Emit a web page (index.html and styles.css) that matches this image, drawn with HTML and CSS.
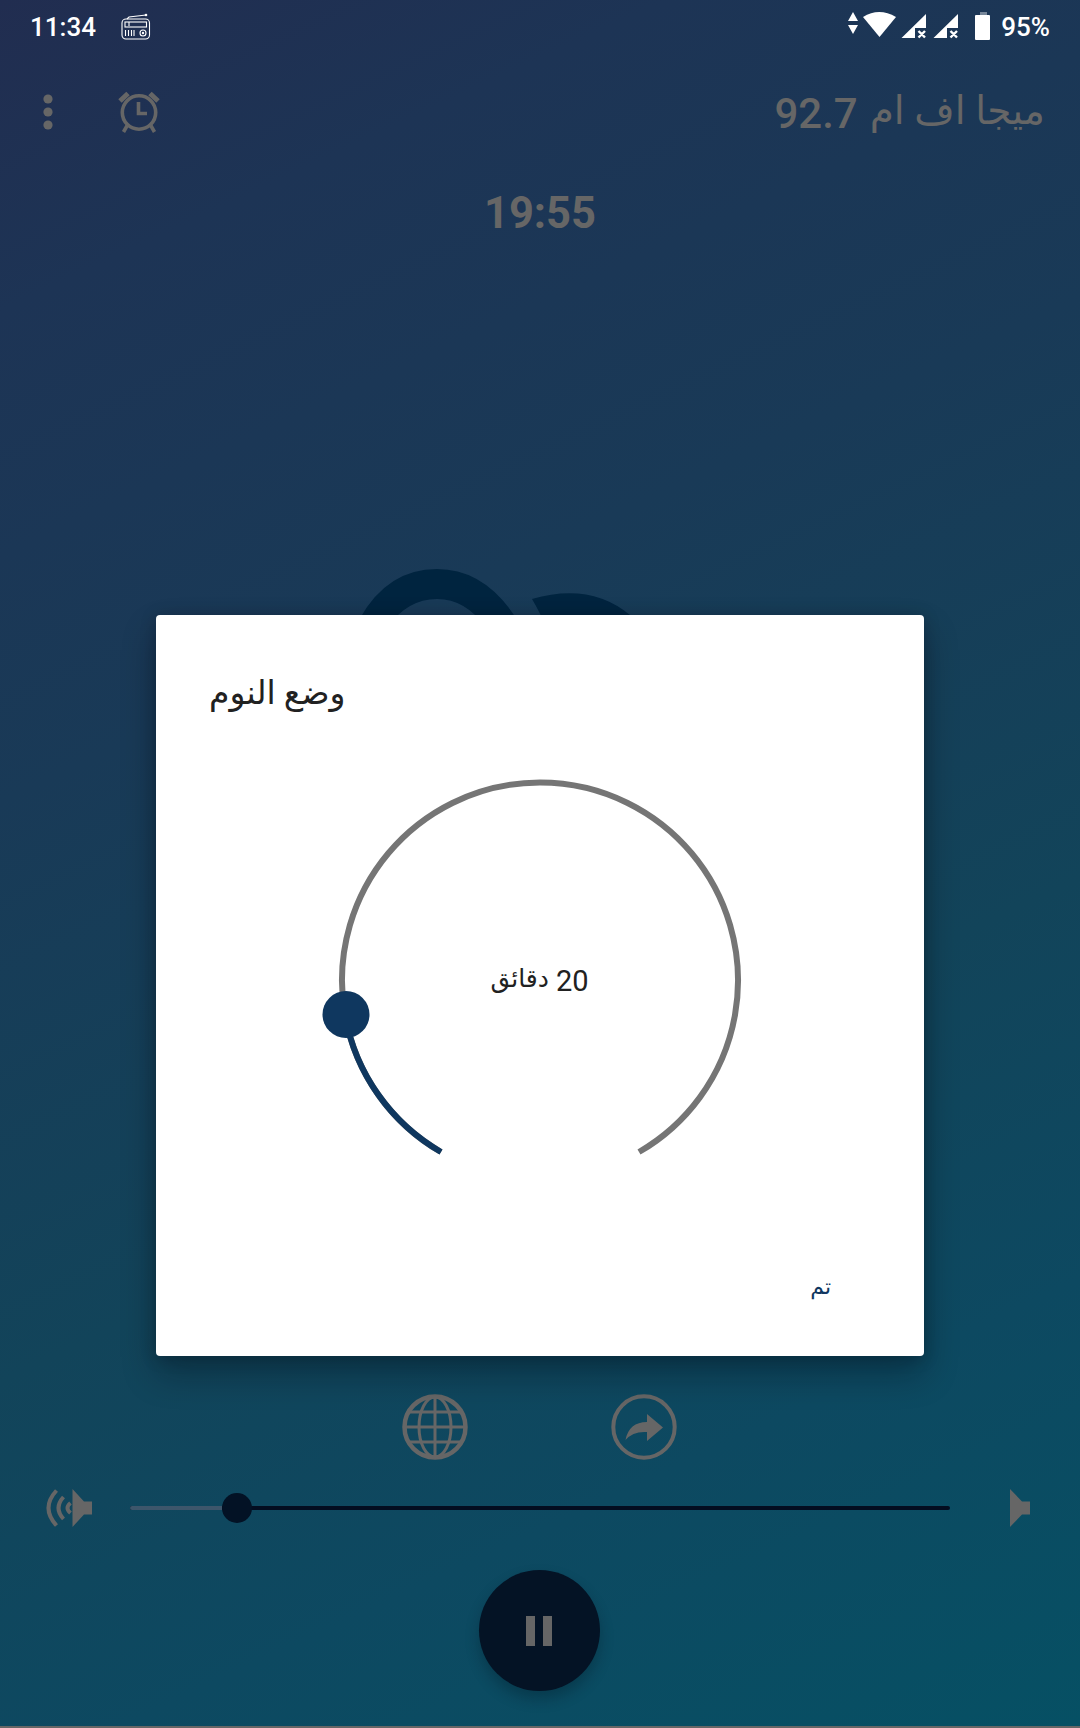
FILE: index.html
```html
<!DOCTYPE html>
<html lang="ar">
<head>
  <meta charset="UTF-8">
  <title>ميجا اف ام 92.7</title>
  <link rel="stylesheet" href="styles.css">
</head>
<body>
  <div class="screen">
    <div class="status-bar">
      <span class="clock">11:34</span>
      <svg class="radio-icon" width="30" height="28" viewBox="0 0 30 28">
        <g fill="none" stroke="#fff" stroke-width="1.1">
          <rect x="1" y="6" width="27.500" height="20" rx="4"/>
          <rect x="4" y="9" width="21.500" height="5"/>
          <path d="M6 6 8 4l17-2M8 9v4M4.500 17v6M7.500 17v6M10.500 17v6M13 17v6"/>
          <circle cx="22" cy="20" r="3"/>
        </g>
        <circle cx="25" cy="2" r="1.300" fill="#fff"/>
        <circle cx="22" cy="20" r="1.200" fill="#fff"/>
      </svg>
      <svg class="signal-icons" width="144" height="30" viewBox="0 0 144 30" fill="#fff">
        <path d="M5 0 10 9H0zM0 13h10l-5 9z"/>
        <path d="M15 5Q31-5 48 5L31.500 25z"/>
        <path d="M78 2v14h-11v10H53.500z"/>
        <path d="M110 2v14H99v10H85.500z"/>
        <path d="m70.500 19 6.500 6.500m0-6.500-6.500 6.500M102.500 19l6.500 6.500m0-6.500-6.500 6.500" stroke="#fff" stroke-width="2.400"/>
        <path d="M132 0h7v3h-7z" opacity=".4"/>
        <rect x="127" y="3" width="15" height="25" rx="1"/>
      </svg>
      <span class="battery">95%</span>
    </div>

    <div class="toolbar">
      <svg class="menu-icon" width="10" height="36" viewBox="0 0 10 36">
        <circle cx="5" cy="5" r="4.600"/><circle cx="5" cy="18" r="4.600"/><circle cx="5" cy="31" r="4.600"/>
      </svg>
      <svg class="alarm-icon" width="42" height="42" viewBox="0 0 42 42">
        <circle cx="21" cy="21.500" r="16.700"/>
        <path d="M2 10 10 2.500M32 2.500l8 7.500" stroke-width="5"/>
        <path d="M20.500 11v11.500H29M9.500 34 5.500 41M32.500 34l4 7"/>
      </svg>
      <h1 class="station" dir="rtl"><span>ميجا اف ام</span> <b>92.7</b></h1>
    </div>

    <div class="timer">19:55</div>

    <div class="cover">
      <svg width="360" height="60" viewBox="360 568 360 60">
        <path d="M355 628Q383 569 437 569 489 569 522 628H486Q466 599 437 599 407 599 387 628z"/>
        <path d="M532 599Q590 582 630 615L645 628H546Q541 614 532 599z"/>
      </svg>
    </div>

    <div class="actions">
      <svg width="66" height="66" viewBox="0 0 66 66">
        <circle cx="33" cy="33" r="30.500" stroke-width="4.500"/>
        <ellipse cx="33" cy="33" rx="16" ry="30"/>
        <path d="M33 2v62M2 33h62M8 18h50M8 48h50"/>
      </svg>
      <svg width="66" height="66" viewBox="0 0 66 66">
        <circle cx="33" cy="33" r="30.700" stroke-width="4"/>
        <path class="solid" d="M36 20 52 33.500 36 47V38Q22 37 14.500 46 18 28 36 28z"/>
      </svg>
    </div>

    <div class="volume">
      <svg class="speaker-loud" width="46" height="38" viewBox="0 0 46 38">
        <path class="solid" d="M26.500 0 38 12.500h8v13h-8L26.500 38z"/>
        <path d="M10.500 1.500Q-5.500 19 10.500 36.500M17.500 8Q7.500 19 17.500 30M24.500 14Q18.500 19 24.500 24"/>
      </svg>
      <div class="track"><div class="level"></div><div class="knob"></div></div>
      <svg class="speaker" width="20" height="38" viewBox="0 0 20 38">
        <path class="solid" d="M0 0 12 12.500h8v13h-8L0 38z"/>
      </svg>
    </div>

    <div class="player">
      <div class="pause"><i></i><i></i></div>
    </div>

    <!-- sleep mode dialog -->
    <div class="dialog">
      <h2>وضع النوم</h2>
      <div class="dial">
        <svg width="450" height="400" viewBox="0 0 450 400">
          <path class="dial-track" d="M126 373A198 198 0 1 1 324 373"/>
          <path class="dial-value" d="M126 373A198 198 0 0 1 30 235.900"/>
          <circle cx="31" cy="235.500" r="23.500"/>
        </svg>
        <span class="minutes" dir="rtl">20 <span class="unit">دقائق</span></span>
      </div>
      <div class="buttons"><span>تم</span></div>
    </div>
  </div>
</body>
</html>
```

FILE: styles.css
```css
body {
  margin: 0;
  font-family: Roboto, "DejaVu Sans", sans-serif;
}
.screen {
  position: relative;
  box-sizing: border-box;
  width: 1080px;
  height: 1728px;
  display: flex;
  flex-direction: column;
  overflow: hidden;
  background: linear-gradient(155deg, #212d50 0%, #1d3455 14%, #193a57 36%, #12445a 62%, #0d4961 80%, #065064 100%);
  border-bottom: 2px solid #666;
}
.screen svg {
  flex: none;
}

.status-bar {
  display: flex;
  height: 54px;
  align-items: center;
  padding: 0 30px;
  color: #fff;
  font-size: 26px;
  font-weight: 500;
}
.radio-icon {
  margin-left: 25px;
}
.signal-icons {
  margin: 0 9px 0 auto;
  overflow: visible;
}

.toolbar {
  display: flex;
  height: 116px;
  align-items: center;
  padding: 0 35px 0 43px;
}
.menu-icon {
  fill: #666;
}
.alarm-icon {
  margin-left: 65px;
  fill: none;
  stroke: #666;
  stroke-width: 3.6;
}
.station {
  display: flex;
  align-items: center;
  gap: 12px;
  margin: 3px 0 0 auto;
  color: #666;
  font-size: 39px;
  font-weight: 400;
}
.station span {
  padding-bottom: 6px;
}
.station b {
  font-size: 42px;
  font-weight: 500;
}

.timer {
  height: 88px;
  line-height: 88px;
  text-align: center;
  color: #666;
  font-size: 43.5px;
  font-weight: 700;
}

.cover {
  height: 826px;
  padding: 310px 360px 0;
  flex: none;
  fill: #00243f;
}

.actions {
  display: flex;
  justify-content: center;
  gap: 143px;
  padding-right: 2px;
  flex: none;
  fill: none;
  stroke: #666;
  stroke-width: 3;
}
.solid {
  fill: #666;
  stroke: none;
}

.volume {
  display: flex;
  align-items: center;
  height: 76px;
  padding: 0 50px 0 46px;
  margin-top: 10px;
}
.speaker-loud {
  fill: none;
  stroke: #666;
  stroke-width: 4;
}
.track {
  display: flex;
  align-items: center;
  flex: none;
  width: 820px;
  margin: 0 60px 0 38px;
  height: 4px;
  background: #030d20;
  border-radius: 2px;
}
.level {
  width: 92px;
  height: 4px;
  background: #3d566b;
  border-radius: 2px 0 0 2px;
}
.knob {
  width: 30px;
  height: 30px;
  border-radius: 50%;
  background: #031225;
}

.player {
  display: flex;
  justify-content: center;
  padding: 24px 2px 0 0;
}
.pause {
  display: flex;
  align-items: center;
  justify-content: center;
  gap: 8px;
  width: 121px;
  height: 121px;
  border-radius: 50%;
  background: #041325;
  box-shadow: 0 8px 14px rgba(0, 20, 30, .3);
}
.pause i {
  width: 9px;
  height: 30px;
  background: #666;
}

.dialog {
  position: absolute;
  left: 156px;
  top: 615px;
  width: 768px;
  height: 741px;
  display: flex;
  flex-direction: column;
  background: #fff;
  border-radius: 4px;
  box-shadow: 0 18px 34px rgba(0, 10, 20, .32), 0 2px 16px rgba(0, 10, 20, .22);
  color: #212121;
}
.dialog h2 {
  margin: 0;
  padding: 54px 53px 0;
  height: 98px;
  line-height: 48px;
  font-size: 33px;
  font-weight: 400;
}
.dial {
  display: grid;
  justify-content: center;
  align-items: center;
  padding: 12px 1px 0 0;
}
.dial svg,
.minutes {
  grid-area: 1 / 1;
}
.dial circle {
  fill: #0f375f;
}
.dial-track,
.dial-value {
  fill: none;
  stroke: #757575;
  stroke-width: 6;
}
.dial-value {
  stroke: #0f375f;
}
.minutes {
  justify-self: center;
  display: flex;
  align-items: center;
  gap: 7px;
  padding-top: 3px;
  font-size: 29px;
}
.unit {
  padding-bottom: 5px;
  font-size: 25px;
}
.buttons {
  display: flex;
  justify-content: flex-end;
  padding: 95px 93px 0;
  color: #0f375f;
  font-size: 22px;
}
```
